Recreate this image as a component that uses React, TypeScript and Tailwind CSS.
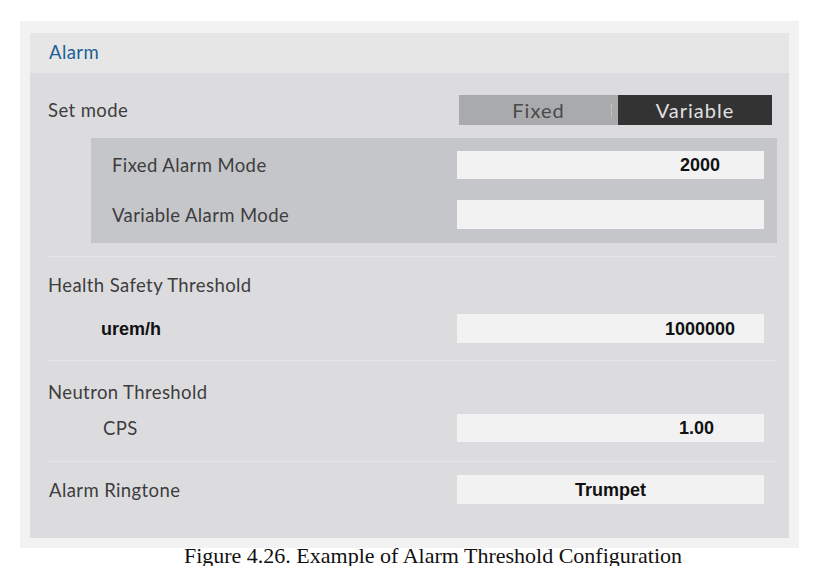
import React from 'react'

const LABEL = "font-['Lato','Open_Sans',sans-serif] text-[18.5px] tracking-[0.4px] text-[#3d3d3d] leading-6"
const VALUE = "font-['Liberation_Sans','Arial',sans-serif] font-bold text-[18px] text-[#111] leading-none"
const FIELD = 'w-[307px] bg-[#f2f2f2] flex items-center'

const Field: React.FC<{ value?: string; h: string; pr?: string; center?: boolean }> = ({ value, h, pr, center }) => (
  <div className={`${FIELD} ${h} ${center ? 'justify-center' : 'justify-end'} ${pr ?? ''}`}>
    {value && <span className={VALUE}>{value}</span>}
  </div>
)

const Divider = () => <div className="ml-[18px] mr-[12px] h-px bg-[#e6e6e8]" />

export default function App() {
  return (
    <div className="w-[820px] h-[566px] bg-white overflow-hidden">
      <div className="ml-[20px] mt-[21px] w-[779px] bg-[#f2f2f2] pt-[12px] px-[10px] pb-[10px]">
        <div className="w-[759px]">
          <div className="h-[40px] bg-[#e6e6e6] pl-[19px] flex items-center">
            <span className="font-['Lato','Open_Sans',sans-serif] text-[18.5px] tracking-[0.4px] text-[#1d5e97]">Alarm</span>
          </div>

          <div className="bg-[#dcdcdf] pt-[22px] pb-[34px]">
            {/* set mode */}
            <div className="h-[30px] flex items-center justify-between pl-[18px] pr-[17px]">
              <span className={LABEL}>Set mode</span>
              <div className="flex h-[30px] w-[313px] font-['Lato','Open_Sans',sans-serif] text-[20px] tracking-[1px]">
                <div className="relative w-[159px] bg-[#a9aaac] flex items-center justify-center text-[#4a4a4a]">
                  Fixed
                  <span className="absolute right-[6px] top-[9px] h-[13px] border-r border-dotted border-[#d6d6d8]" />
                </div>
                <div className="flex-1 bg-[#333333] flex items-center justify-center text-[#e0e0e0]">Variable</div>
              </div>
            </div>

            <div className="mt-[13px] ml-[61px] mr-[12px] bg-[#c5c6c9] pt-[13px] pb-[14px] pl-[21px] pr-[13px]">
              <div className="flex items-center justify-between">
                <span className={LABEL}>Fixed Alarm Mode</span>
                <Field value="2000" h="h-[28px]" pr="pr-[44px]" />
              </div>
              <div className="flex items-center justify-between mt-[21px]">
                <span className={LABEL}>Variable Alarm Mode</span>
                <Field h="h-[29px]" />
              </div>
            </div>

            <div className="mt-[13px]"><Divider /></div>

            {/* health safety */}
            <div className="pl-[18px] mt-[16px]">
              <span className={LABEL}>Health Safety Threshold</span>
            </div>
            <div className="flex items-center justify-between pl-[71px] pr-[25px] mt-[16px]">
              <span className={`${VALUE} text-[17px]`}>urem/h</span>
              <Field value="1000000" h="h-[29px]" pr="pr-[29px]" />
            </div>

            <div className="mt-[17px]"><Divider /></div>

            {/* neutron */}
            <div className="pl-[18px] mt-[19px]">
              <span className={LABEL}>Neutron Threshold</span>
            </div>
            <div className="flex items-center justify-between pl-[73px] pr-[25px] mt-[9px]">
              <span className={LABEL}>CPS</span>
              <Field value="1.00" h="h-[28px]" pr="pr-[50px]" />
            </div>

            <div className="mt-[19px]"><Divider /></div>

            <div className="flex items-center justify-between pl-[19px] pr-[25px] mt-[13px]">
              <span className={LABEL}>Alarm Ringtone</span>
              <Field value="Trumpet" h="h-[29px]" center />
            </div>
          </div>
        </div>
      </div>
      <div className="pl-[46px] text-center font-['Liberation_Serif',serif] text-[22px] leading-[16px] text-[#111]">
        Figure 4.26. Example of Alarm Threshold Configuration
      </div>
    </div>
  )
}
